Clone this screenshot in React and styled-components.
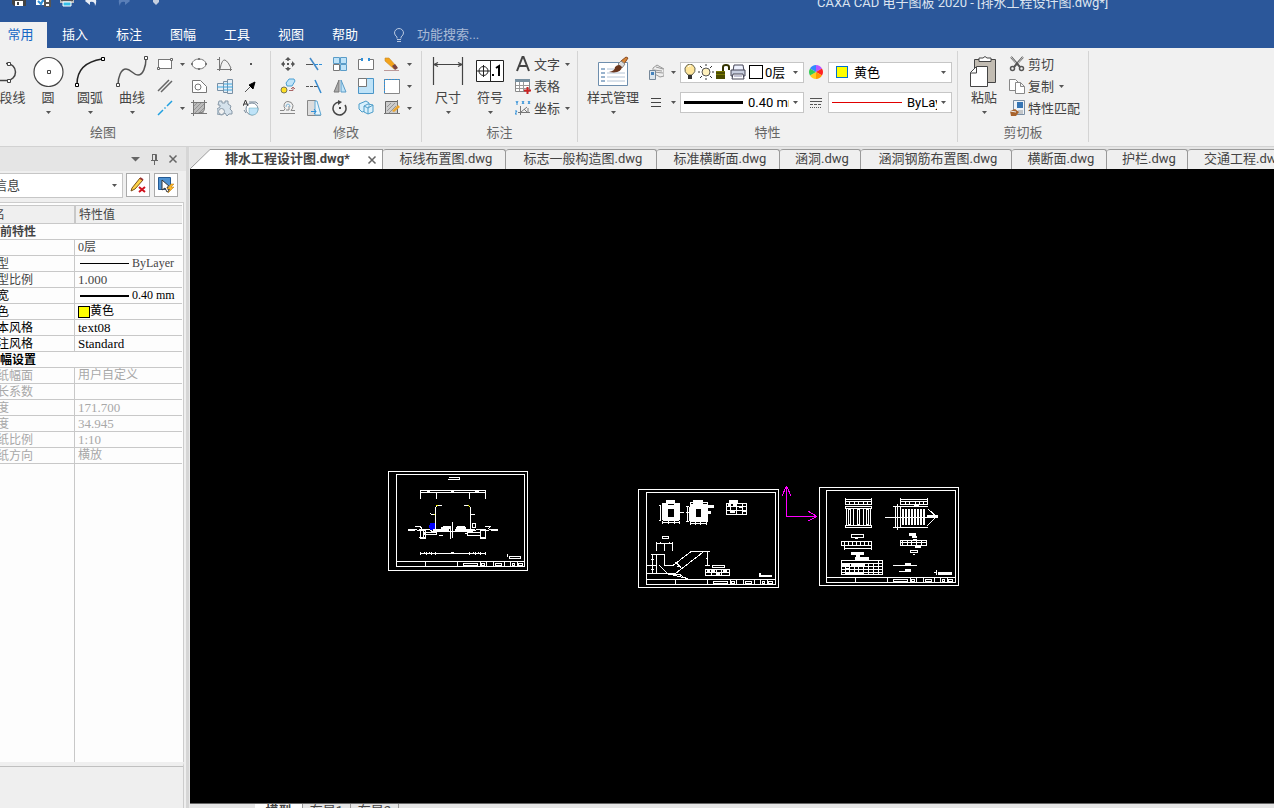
import React from "react";
import styled, { createGlobalStyle, css } from "styled-components";

const ink = "#444";
const blue = "#2f8fd8";
const sky = "#bfe3f8";

const menu = ["常用", "插入", "标注", "图幅", "工具", "视图", "帮助"];

const documents = [
  "标线布置图",
  "标志一般构造图",
  "标准横断面",
  "涵洞",
  "涵洞钢筋布置图",
  "横断面",
  "护栏",
  "交通工程",
];

const properties = [
  { group: "当前特性", tone: "#444" },
  { name: "", value: "0层", tone: "#444" },
  { name: "线型", value: "ByLayer", line: 1, tone: "#444" },
  { name: "线型比例", value: "1.000", latin: true, tone: "#444" },
  { name: "线宽", value: "0.40 mm", line: 2, tone: "#000" },
  { name: "颜色", value: "黄色", swatch: true, tone: "#000" },
  { name: "文本风格", value: "text08", latin: true, tone: "#000" },
  { name: "标注风格", value: "Standard", latin: true, tone: "#000" },
  { group: "图幅设置", tone: "#000" },
  { name: "图纸幅面", value: "用户自定义", tone: "#a8a8a8" },
  { name: "加长系数", value: "", tone: "#a8a8a8" },
  { name: "宽度", value: "171.700", latin: true, tone: "#a8a8a8" },
  { name: "高度", value: "34.945", latin: true, tone: "#a8a8a8" },
  { name: "图纸比例", value: "1:10", latin: true, tone: "#a8a8a8" },
  { name: "图纸方向", value: "横放", tone: "#a8a8a8" },
];

/* 16px tool icons */
const icons = {
  rect: (
    <>
      <rect x="1.5" y="3.5" width="13" height="9" fill="#fff" stroke="#777" />
      <path d="M.5 11.500h2v2h-2zM13.500 2.500h2v2h-2z" fill="#fff" stroke="#666" />
    </>
  ),
  parallel: <path d="M1 13L12 2M4 14L15 3" stroke="#666" strokeWidth="1.5" />,
  center: <path d="M1 15L6 10M7.500 8.500l1-1M10 6l5-5" stroke="#20a0e0" strokeWidth="1.5" />,
  ellipse: (
    <>
      <ellipse cx="8" cy="8" rx="7" ry="5" fill="#fff" stroke="#777" />
      <path d="M0 7h2v2H0zM14 7h2v2h-2zM7 2h2v2H7zM7 12h2v2H7z" fill="#777" />
    </>
  ),
  polygonHole: (
    <>
      <path d="M1.500 2.500h8l6 6v6h-14z" fill="#fff" stroke="#777" />
      <circle cx="7" cy="9" r="3" fill="none" stroke="#777" />
    </>
  ),
  hatch: (
    <>
      <rect x="2" y="3" width="11" height="10" fill="#bbb" />
      <path d="M2 7l4-4M2 11l8-8M4 13l9-9M8 13l5-5" stroke="#888" strokeWidth=".8" />
      <path d="M2.500 0v16M0 2.500h16M13.500 0v8q0 5-6 5M0 13.500h16" fill="none" stroke="#777" />
    </>
  ),
  graph: <path d="M2.500 1v14M0 3.500h3M0 13.500h15M13.500 12v3M3 13q2-10 5-9 3 1 6 8" fill="none" stroke="#777" />,
  bolt: (
    <>
      <path d="M.5 5.500h6v7h-6zM6.500 3.500h4v11h-4zM10.500 1.500h5v14h-5z" fill="#e6eef5" stroke="#7890a5" />
      <path d="M0 9h16M7 6h8M7 12h8" stroke="#3aa6e0" />
    </>
  ),
  gears: (
    <>
      <path d="M2 1h3v2h3V1h3v3l3 2-1 3 2 2v3h-3l-2 2-2-3-3 2-5-1V9l3-2V5H1z" fill="#d5e2ec" stroke="#8899a8" />
      <circle cx="4.500" cy="11.500" r="3" fill="#f1f1f1" stroke="#8899a8" />
    </>
  ),
  dot: <path d="M7 7h2v2H7z" fill="#555" />,
  arrow: (
    <>
      <path d="M2 14l6-6" stroke="#555" />
      <path d="M12 4L6 7l4 4z" fill="#000" stroke="#000" />
    </>
  ),
  fill: (
    <>
      <circle cx="9" cy="9" r="6" fill="#fff" stroke="#789" />
      <path d="M6 8h9q0 7-6 7-3 0-3-3z" fill={sky} stroke="#6ab" strokeWidth=".5" />
      <path d="M0 6L2.500 0 5 6M1 4h3" fill="none" stroke="#333" />
      <path d="M6 2h7l2 2M1 10l2 3" stroke="#789" fill="none" />
    </>
  ),
  move: (
    <>
      <path d="M7 7h2v2H7zM5 4l3-3 3 3zM5 12l3 3 3-3zM4 5L1 8l3 3zM12 5l3 3-3 3z" fill="#555" />
      <path d="M8 2v3M8 11v3M2 8h3M11 8h3" stroke="#555" strokeWidth="1.5" />
    </>
  ),
  trim: (
    <>
      <path d="M4 2l8 12" stroke="#4389c8" strokeWidth="1.5" />
      <path d="M0 8.500h7" stroke="#555" />
      <path d="M9 8.500h7" stroke={blue} strokeDasharray="3 1" />
    </>
  ),
  array: (
    <g stroke="#5a9cc8">
      <path d="M1.500 1.500h6v6h-6zM8.500 1.500h6v6h-6zM8.500 8.500h6v6h-6z" fill={sky} />
      <path d="M1.500 8.500h6v6h-6z" fill="#fff" stroke="#777" />
    </g>
  ),
  breakLine: (
    <>
      <path d="M4.500 3.500h-4v10h15v-10h-4" fill="#fff" stroke="#777" />
      <path d="M4 2v3M11 2v3" stroke={blue} strokeWidth="2" />
    </>
  ),
  erase: (
    <>
      <path d="M0 14.500h15" stroke="#b99" />
      <path d="M1 2l4 0 8 9-3 2-9-8z" fill="#f3a31b" stroke="#c88a28" strokeWidth=".6" />
      <path d="M8 10l3-2 3 4-3 2z" fill="#744" />
    </>
  ),
  copy: (
    <>
      <path d="M6 5l3-4h5l1 2-3 5H7z" fill={sky} stroke="#4b9fd2" />
      <circle cx="4" cy="12" r="3" fill="#ffdf25" stroke="#775" />
      <path d="M9 12.500h4v-3M11 11l2-2 2 2" fill="none" stroke="#a66" />
    </>
  ),
  extend: (
    <>
      <path d="M0 8.500h3M4 8.500h3M8 8.500h4" stroke="#555" />
      <path d="M9 2l6 13" stroke="#358bd0" strokeWidth="1.500" />
    </>
  ),
  mirror: (
    <>
      <path d="M7 2v12H2z" fill="#aaa" stroke="#777" />
      <path d="M9 2v12h5z" fill={sky} stroke="#5a9cc8" />
    </>
  ),
  scale: (
    <>
      <path d="M.5.500h15v15H.500z" fill={sky} stroke="#4b96c8" />
      <path d="M.5.500h8v8h-8z" fill="#fff" stroke="#777" />
    </>
  ),
  stretch: (
    <>
      <path d="M.5 1.500h15v14H.500z" fill="#fff" stroke="#888" />
      <path d="M.5 15V1.500h15" stroke={blue} strokeDasharray="2 1" />
    </>
  ),
  offset: (
    <>
      <path d="M0 10.500h4q2-2 0-4 0-5 4-5t5 4q0 3-2 5h4" fill="none" stroke="#888" />
      <path d="M0 13.500h15M6 10h3V6" fill="none" stroke="#888" />
      <path d="M6 7q0-3 2-3t2 3" fill="none" stroke="#85b8d8" />
    </>
  ),
  chamfer: (
    <>
      <path d="M1.500.500h8l5 15h-13z" fill="#ddd" stroke="#888" />
      <path d="M9 1h2l4 14H9z" fill="#e7f4fb" stroke="#60a8d3" />
      <path d="M5 11.500h5M8 9l2 2.500L8 14" stroke={blue} fill="none" />
    </>
  ),
  rotate: (
    <>
      <path d="M7 2a6.500 6.500 0 1 0 6 3" fill="none" stroke={ink} strokeWidth="1.500" />
      <path d="M6 0l4 2-4 3z" fill={ink} />
      <path d="M7 7h2v2H7z" fill={ink} />
    </>
  ),
  block: (
    <g fill="#d9f0fc" stroke="#4d9dc9">
      <path d="M1 4l7-3 3 2v7l-7 2-3-3z" />
      <path d="M6 6l4-2 5 1v7l-5 2-4-2zM6 6l4 2 5-3M10 8v6" />
    </g>
  ),
  blockEdit: (
    <>
      <path d="M1.500 1.500h12v12h-12z" fill="#ccc" stroke="#666" />
      <path d="M3 7l4-4M3 11l8-8M5 13l7-7" stroke="#888" strokeWidth=".8" />
      <path d="M8 11l6-6 2 2-6 5z" fill="#eba52f" />
      <path d="M0 13.500h16M13.500 0v5" stroke="#777" />
    </>
  ),
  letter: <path d="M2 15L7.500 1h1L14 15M4 10h8" fill="none" stroke={ink} strokeWidth="2" />,
  table: (
    <>
      <path d="M.5 1.500h14v12H.500z" fill="#fff" stroke="#888" />
      <path d="M0 1h15v3H0z" fill="#7890a0" />
      <path d="M4.500 4v9M8.500 4v9M1 7.500h13M1 10.500h13" stroke="#999" />
      <path d="M12.500 9v7M9 12.500h7" stroke="#c22" strokeWidth="2" />
    </>
  ),
  coord: (
    <>
      <path d="M5.500 6v9M3 12.500h12M6 12L12 7M9 9l4 4V8" fill="none" stroke="#777" />
      <path d="M1 1l1 2 1-2M2 3v2M7 1l2 3M9 1L7 4M13 1l2 3M15 1l-2 3M0 11h2l-2 3h2" fill="none" stroke={blue} />
    </>
  ),
  layers: (
    <>
      <path d="M5 4l4-3 7 4v7l-4 1-7-4z" fill="#eee" stroke="#999" />
      <path d="M6 6l8 1M6 8l9 1M8 3l7 2" stroke="#999" />
      <path d="M1.500 6.500h6v9h-6z" fill="#dce6ee" stroke="#789" />
      <path d="M3 8h3v3H3z" fill="#4583bd" />
    </>
  ),
  weights: <path d="M3 4.500h10M3 8.500h10M3 12.500h10" stroke="#444" />,
  wheel: (
    <>
      <path d="M8 8V1a7 7 0 0 1 6 3.500z" fill="#b5f" />
      <path d="M8 8l6-3.500a7 7 0 0 1 0 7z" fill="#f22" />
      <path d="M8 8l6 3.500A7 7 0 0 1 8 15z" fill="#f90" />
      <path d="M8 8v7a7 7 0 0 1-6-3.500z" fill="#fc2" />
      <path d="M8 8l-6 3.500a7 7 0 0 1 0-7z" fill="#3c5" />
      <path d="M8 8L2 4.500A7 7 0 0 1 8 1z" fill="#38f" />
    </>
  ),
  linetypes: (
    <>
      <path d="M2 4.500h12M2 7.500h12" stroke="#555" />
      <path d="M2 10.500h12" stroke="#555" strokeDasharray="3 1" />
      <path d="M2 13.500h12" stroke="#555" strokeDasharray="1 1" />
    </>
  ),
  cut: (
    <>
      <path d="M2 1l9 10M14 1L5 11" stroke="#555" strokeWidth="2" />
      <path d="M2 1l5 6M14 1L9 7" stroke="#eee" strokeWidth=".8" />
      <circle cx="3.500" cy="12.500" r="2" fill="none" stroke="#555" strokeWidth="1.500" />
      <circle cx="12.500" cy="12.500" r="2" fill="none" stroke="#555" strokeWidth="1.500" />
    </>
  ),
  pages: (
    <g fill="#fff" stroke="#888">
      <path d="M.5 1.500h6l3 3v8h-9z" />
      <path d="M6.500 4.500h5l4 4v7h-9zM11.500 4.500v4h4" />
    </g>
  ),
  match: (
    <>
      <path d="M4.500.500h11v14h-11z" fill="#eef3f8" stroke="#7a8ea3" />
      <path d="M8 2h6v6H8z" fill="#3575b5" />
      <path d="M9 11h5M9 13h5" stroke="#999" />
      <path d="M1 11l5-2 4 3-3 4H2z" fill="#a8632d" />
      <path d="M1 11l6 1" stroke="#eee" />
    </>
  ),
  save: (
    <>
      <path d="M1 0h14v15H3l-2-2z" fill="#444" />
      <path d="M4 0h8v7H4zM4 10h8v5H4z" fill="#fff" />
      <path d="M6 11h2v3H6z" fill="#444" />
    </>
  ),
  saveAs: (
    <>
      <path d="M1 0h14v14H1z" fill="#fff" />
      <path d="M3 10l3 3 2-4 3 2" stroke={blue} strokeWidth="2" fill="none" />
      <path d="M9 9h7v7H9z" fill="#555" />
      <path d="M11 9h3v2h-3zM11 13h3v2h-3z" fill="#fff" />
    </>
  ),
  print: (
    <>
      <path d="M1 5h14v7H1z" fill="#bbb" />
      <path d="M2 8h12v2H2z" fill="#555" />
      <path d="M4 11h8v4H4z" fill="#35bfe7" stroke="#fff" />
    </>
  ),
  undo: <path d="M6 5L2 10l5 4v-3q5-1 5 4 4-9-5-8V5z" fill="#e8edf5" />,
  redo: <path d="M10 5l4 5-5 4v-3q-5-1-5 4-4-9 5-8V5z" fill="#5a7fb8" />,
  more: <path d="M5 9h6v2l-3 3-3-3z" fill="#c5cfdf" />,
  bulbOutline: (
    <path
      d="M6 11.500V10Q3.500 8 3.500 6a4.500 4.500 0 0 1 9 0q0 2-2.500 4v1.500M6 12.500h4M6 14.500h4"
      fill="none"
      stroke="#b8c8e0"
    />
  ),
  bulb: (
    <>
      <path d="M6 11Q2 8 3 4q2-4 5-4t5 4q1 4-3 7z" fill="#ffe69b" stroke="#665" />
      <path d="M6 11h4v4H6z" fill="#333" />
      <path d="M6 3q1-2 3-1" stroke="#fff" fill="none" />
    </>
  ),
  sun: (
    <>
      <circle cx="8" cy="8" r="4" fill="#fff1bd" stroke="#555" />
      <path d="M8 0v2M8 14v2M0 8h2M14 8h2M2 2l2 2M12 12l2 2M14 2l-2 2M4 12l-2 2" stroke="#333" />
    </>
  ),
  lock: (
    <>
      <path d="M2 7h9v8H2z" fill="#777700" />
      <path d="M2 9h9M2 12h9M2 14h9" stroke="#222200" />
      <path d="M9 7V3q0-2 3-2t3 2v3" stroke="#333300" strokeWidth="2" fill="none" />
    </>
  ),
  printer: (
    <>
      <path d="M4 1h9l1 6H3z" fill="#eef2ff" stroke="#445" />
      <path d="M1 6h14v6H1z" fill="#c9cfdf" stroke="#445" />
      <path d="M3 10h10l1 5H2z" fill="#fff" stroke="#445" />
      <path d="M4 12h8" stroke="#88a" />
    </>
  ),
  pencilX: (
    <>
      <path d="M2 11L10 1l3 2-8 9-4 2z" fill="#ffd346" stroke="#775019" />
      <path d="M10 1l3 2" stroke="#933" strokeWidth="2" />
      <path d="M9 10l6 5M15 10l-6 5" stroke="#d1121d" strokeWidth="2" />
    </>
  ),
  pick: (
    <>
      <path d="M.5.500h12v12H.500z" fill="#4d91d1" stroke="#245a94" />
      <path d="M4 3v10l3-2 2 4 2-1-2-4h3z" fill="#fff" stroke="#333" />
      <path d="M13 7l-4 5h3l-2 4 6-6h-3l3-3z" fill="#ffb928" stroke="#b47410" strokeWidth=".5" />
    </>
  ),
  pin: <path d="M6.500 3.500h4v6M6.500 3v6M9.500 3v6M5 9.500h7M8.500 10v4" fill="none" stroke="#666" />,
  close: <path d="M4.500 4.500l7 7M11.500 4.500l-7 7" stroke="#666" strokeWidth="1.500" />,
  down: <path d="M4 6h9l-4.500 4.500z" fill="#666" />,
};

/* 32px ribbon icons */
const bigIcons = {
  polyline: (
    <>
      <path d="M0 25.500h17a8.500 8.500 0 0 0 0-17h-1" fill="none" stroke={ink} strokeWidth="1.500" />
      <path d="M17.500 7.500h3v3h-3zM17.500 24.500h3v3h-3z" fill="#fff" stroke={ink} />
    </>
  ),
  circle: (
    <>
      <circle cx="16.500" cy="17" r="14.500" fill="#fff" stroke={ink} strokeWidth="1.200" />
      <path d="M15.500 15.500h3v3h-3z" fill="#fff" stroke={ink} />
    </>
  ),
  arc: (
    <>
      <path d="M3 29Q3 8 28 4" fill="none" stroke="#222" strokeWidth="1.500" />
      <path d="M1.500 28.500h3v3h-3zM27.500 2.500h3v3h-3z" fill="#fff" stroke="#000" />
    </>
  ),
  spline: (
    <>
      <path d="M2 30C2 22 5 14 10 14s7 6 12 6 8-8 8-17" fill="none" stroke="#555" strokeWidth="1.500" />
      <path d="M.5 28.500h3v3h-3zM28.500 1.500h3v3h-3z" fill="#fff" stroke={ink} />
    </>
  ),
  dimension: (
    <path
      d="M1.500 2v28M30.500 2v28M2 9.500h28M6 7.500l-4 2 4 2M26 7.500l4 2-4 2"
      fill="none"
      stroke={ink}
      strokeWidth="1.200"
    />
  ),
  symbol: (
    <>
      <path d="M2.500 5.500h27v21h-27zM16.500 5v21" fill="#fff" stroke="#222" />
      <circle cx="9.500" cy="16" r="4.500" fill="none" stroke="#222" />
      <path d="M3 16h13M9.500 10v12" stroke="#222" />
      <path d="M22 13l3-2v10M19 19v2" stroke="#000" strokeWidth="2" fill="none" />
    </>
  ),
  styles: (
    <>
      <path d="M1.500 7.500h29v23h-29z" fill="#fff" stroke="#6e8ead" />
      <path d="M4 14h4M4 18h4M4 22h4M4 26h4" stroke="#35699c" />
      <path d="M10 14h7M10 18h18M10 22h18M10 26h18" stroke="#b4c4d6" />
      <path d="M24 6l5-4 2 1-4 6z" fill="#d58636" stroke="#8b4a20" />
      <path d="M21 9l3-3 4 3-3 4z" fill="#ddd" stroke="#888" />
      <path d="M12 17q6-1 6-5 4-4 7 0-1 7-13 5z" fill="#6b371e" />
    </>
  ),
  paste: (
    <>
      <path d="M6.500 4.500h21v23h-21z" fill="#c2bcb2" stroke={ink} />
      <path d="M11 6.500V3h4q2-3 4 0h4v3.500z" fill="#fff" stroke={ink} />
      <path d="M8.500 11.500h11v20h-17v-14z" fill="#fff" stroke={ink} />
      <path d="M8.500 12v6h-6" fill="none" stroke={ink} />
    </>
  ),
};

const Icon = ({ name }) => <Glyph viewBox="0 0 16 16">{icons[name]}</Glyph>;

const Caret = () => (
  <CaretMark viewBox="0 0 5 3">
    <path d="M0 0h5L2.500 3z" />
  </CaretMark>
);

const Tool = ({ icon, label, caret }) => (
  <ToolButton type="button" aria-label={label ? undefined : icon}>
    <Icon name={icon} />
    {label && <span>{label}</span>}
    {caret && <Caret />}
  </ToolButton>
);

const Large = ({ icon, label, wide, caret = true }) => (
  <LargeButton type="button" $wide={wide}>
    <LargeGlyph viewBox="0 0 32 32">{bigIcons[icon]}</LargeGlyph>
    <span>{label}</span>
    {caret && <Caret />}
  </LargeButton>
);

const Combo = ({ name, value, children }) => (
  <ComboBox>
    {children}
    <select aria-label={name} defaultValue={value}>
      <option>{value}</option>
    </select>
    <Caret />
  </ComboBox>
);

/* title block strip shared by all drawing sheets, stands on its inner frame */
const SheetFrame = ({ d, block }) => (
  <>
    <path d={d} />
    <g transform={block}>
      <path d="M0 0h384M87 0v15M183 0v15M252 0v15M270 0v15M291 0v15M324 0v15M342 0v15M363 0v15" />
      <path d="M201 6h42v6h-42zM255 5h9v7h-9zM297 6h18v6h-18zM348 6h7v6h-7zM366 6h12v6h-12z" />
    </g>
  </>
);

const App = () => {
  return (
    <Shell>
      <GlobalStyle />
      <Header>
        <TitleBar>
          <QuickAccess>
            <Icon name="save" />
            <Icon name="saveAs" />
            <Icon name="print" />
            <Icon name="undo" />
            <HistoryTools>
              <Icon name="redo" />
              <Icon name="more" />
            </HistoryTools>
          </QuickAccess>
          <Title>CAXA CAD 电子图板 2020 - [排水工程设计图.dwg*]</Title>
        </TitleBar>
        <Menu>
          {menu.map((item, i) => (
            <MenuTab type="button" key={item} $active={i === 0}>
              {item}
            </MenuTab>
          ))}
          <Search>
            <Icon name="bulbOutline" />
            <input type="text" aria-label="功能搜索" placeholder="功能搜索..." />
          </Search>
        </Menu>
      </Header>

      <Ribbon>
        <Group $width={335} $end>
          <GroupBody>
            <Large icon="polyline" label="多段线" caret={false} />
            <Large icon="circle" label="圆" />
            <Large icon="arc" label="圆弧" />
            <Large icon="spline" label="曲线" />
            <ToolGrid $columns="34px 26px 26px 26px">
              <Tool icon="rect" caret />
              <Tool icon="ellipse" />
              <Tool icon="graph" />
              <Tool icon="dot" />
              <Tool icon="parallel" />
              <Tool icon="polygonHole" />
              <Tool icon="bolt" />
              <Tool icon="arrow" />
              <Tool icon="center" caret />
              <Tool icon="hatch" />
              <Tool icon="gears" />
              <Tool icon="fill" />
            </ToolGrid>
          </GroupBody>
          <GroupName>绘图</GroupName>
        </Group>
        <Group $width={150}>
          <GroupBody>
            <ToolGrid $columns="26px 26px 26px 26px 36px">
              <Tool icon="move" />
              <Tool icon="trim" />
              <Tool icon="array" />
              <Tool icon="breakLine" />
              <Tool icon="erase" caret />
              <Tool icon="copy" />
              <Tool icon="extend" />
              <Tool icon="mirror" />
              <Tool icon="scale" />
              <Tool icon="stretch" caret />
              <Tool icon="offset" />
              <Tool icon="chamfer" />
              <Tool icon="rotate" />
              <Tool icon="block" />
              <Tool icon="blockEdit" caret />
            </ToolGrid>
          </GroupBody>
          <GroupName>修改</GroupName>
        </Group>
        <Group $width={156}>
          <GroupBody>
            <Large icon="dimension" label="尺寸" />
            <Large icon="symbol" label="符号" />
            <ToolGrid $columns="auto">
              <Tool icon="letter" label="文字" caret />
              <Tool icon="table" label="表格" />
              <Tool icon="coord" label="坐标" caret />
            </ToolGrid>
          </GroupBody>
          <GroupName>标注</GroupName>
        </Group>
        <Group $width={380}>
          <GroupBody>
            <Large icon="styles" label="样式管理" wide />
            <PropertyGrid>
              <Tool icon="layers" caret />
              <Combo name="图层" value="0层">
                <Icon name="bulb" />
                <Icon name="sun" />
                <Icon name="lock" />
                <Icon name="printer" />
                <Swatch $color="#fff" $edge="#000" />
              </Combo>
              <Tool icon="wheel" />
              <Combo name="颜色" value="黄色">
                <ColorPad>
                  <Swatch $color="#ff0" $edge="#0070d0" $small />
                </ColorPad>
              </Combo>
              <Tool icon="weights" caret />
              <Combo name="线宽" value="0.40 mm">
                <Stroke $size={3} $width={59} $color="#000" />
              </Combo>
              <Tool icon="linetypes" />
              <Combo name="线型" value="ByLayer">
                <Stroke $size={1} $width={70} $color="#e00000" />
              </Combo>
            </PropertyGrid>
          </GroupBody>
          <GroupName>特性</GroupName>
        </Group>
        <Group $width={131}>
          <GroupBody>
            <Large icon="paste" label="粘贴" />
            <ToolGrid $columns="auto">
              <Tool icon="cut" label="剪切" />
              <Tool icon="pages" label="复制" caret />
              <Tool icon="match" label="特性匹配" />
            </ToolGrid>
          </GroupBody>
          <GroupName>剪切板</GroupName>
        </Group>
      </Ribbon>

      <Workspace>
        <Panel>
          <PanelHeader>
            <Icon name="down" />
            <Icon name="pin" />
            <Icon name="close" />
          </PanelHeader>
          <PanelTools>
            <Combo name="选择" value="信息" />
            <PanelButton type="button" aria-label="清除">
              <Icon name="pencilX" />
            </PanelButton>
            <PanelButton type="button" aria-label="拾取">
              <Icon name="pick" />
            </PanelButton>
          </PanelTools>
          <PropertySheet>
            <PropertyTable>
              <thead>
                <tr>
                  <th>特性名</th>
                  <th>特性值</th>
                </tr>
              </thead>
              <tbody>
                {properties.map((row, i) =>
                  row.group ? (
                    <PropertyRow key={i} $tone={row.tone}>
                      <th colSpan={2}>{row.group}</th>
                    </PropertyRow>
                  ) : (
                    <PropertyRow key={i} $tone={row.tone} $latin={row.latin}>
                      <td>{row.name}</td>
                      <td>
                        <Value>
                          {row.line && <Stroke $size={row.line} $width={49} $color="#000" />}
                          {row.swatch && <Swatch $color="#ff0" $edge="#000" $small />}
                          {row.value}
                        </Value>
                      </td>
                    </PropertyRow>
                  )
                )}
              </tbody>
            </PropertyTable>
            <ColumnRest />
          </PropertySheet>
          <PanelFoot />
        </Panel>
        <Splitter />

        <Editor>
          <DocumentTabs>
            <ActiveDocument>
              <svg viewBox="0 0 20 20">
                <path d="M0 20L20 0v20z" fill="#fff" />
                <path d="M0 20L20 .5" stroke="#999" />
              </svg>
              <button type="button">排水工程设计图.dwg*</button>
              <CloseButton type="button" aria-label="关闭">
                <Icon name="close" />
              </CloseButton>
            </ActiveDocument>
            {documents.map((name) => (
              <DocumentTab type="button" key={name} $width={name.length * 14 + 53}>
                {name}.dwg
              </DocumentTab>
            ))}
          </DocumentTabs>

          <Canvas>
            <Drawing $x={190} $y={296} $w={156} $h={110} viewBox="0 0 468 330">
              <SheetFrame d="M25.500 19.500h417v297h-417zM49.500 28.500h384v276h-384z" block="translate(49.500 289.500)" />
              <path d="M208 37.500h31v6h-31M205 43.500h4M121.500 102V76.500h195v25M121 82.500h195M169.500 80v22M268.500 80v22" />
              <path d="M140 79.500h10M214 76.500h9M286 79.500h10" strokeWidth="6" />
              <path d="M166.500 196v-69l6-6h12M271.500 196v-69l-6-6h-15M150 146l8 3h8M284 147h-12M217.500 171v48M211.500 183v38" />
              <path d="M169 123l5-3M265 122l6 3M162 147v4" stroke="#ff0" />
              <path d="M150 177h15M148 184h18M150 190h15" stroke="#00f" strokeWidth="7" />
              <path d="M86 193h18l12 4 14-4h16l10 6h120l20-6h14l10 4 14-4h20M106 183h14l6 8M316 183h16l-8 10" />
              <path d="M84 194h20M334 194h20M182 190h28M228 190h30M158 196h50M226 196h60M118 194h18M300 194h18" strokeWidth="6" />
              <path d="M190 183h16l4 6M230 183h22l6 6M134 203h34v6h-34zM262 202h40v8h-40z" />
              <path d="M121.500 197h14v22h-14zM302.500 197h14v22h-14zM278.500 176h8v12h-8zM130 199v20M176 210h14M256 206h8" />
              <path d="M118 218h18M300 218h18M218 200v5" />
              <path d="M121 265.500h196M122 262v8M133 262v6M139 262v8M149 262v6M155 262v8M167 262v8M268 262v8M279 262v6M285 262v8M296 262v6M302 262v8M315 262v8" />
              <path d="M214 263h8" strokeWidth="5" />
              <path d="M387.500 274.500h34v6h-34zM383 267v8" />
            </Drawing>

            <Drawing $x={440} $y={313} $w={150} $h={110} viewBox="0 0 450 330">
              <SheetFrame d="M25.500 22.500h420v294h-420zM49.500 31.500h387v276h-387z" block="translate(49.500 292.500)" />
              <path d="M108 60h26M190 60h28M298 60h26" strokeWidth="10" />
              <path d="M97.500 64.500h52v48h-52z" />
              <path d="M105 64v48M141 64v48" strokeWidth="16" />
              <path d="M98 74h50M98 110h50" strokeWidth="12" />
              <path d="M97 120h53M97 116v9M115 116v9M132 116v9M149 116v9M91 70v47M87 70h6M87 116h6M150 90h12" />
              <path d="M180.500 61.500h51v56h-51z" />
              <path d="M188 66v50M222 66v50" strokeWidth="18" />
              <path d="M180 74h50M180 112h50" strokeWidth="16" />
              <path d="M172 74v43M168 90h10M178 74v43M168 74h10M168 117h10M180 125h50M181 121v8M197 121v8M212 121v8M229 121v8" />
              <path d="M231 74h20M231 92h12" strokeWidth="8" />
              <path d="M289.500 64.500h61v33h-61zM289 74h60M289 85h60M301 64v30M318 64v32M336 64v32" />
              <path d="M295 70h8M310 70h8M326 74h10M340 88h9M304 90h10" strokeWidth="6" />
              <path d="M97.500 163.500h18v6h-18zM79 184h49M79.500 181v25M103.500 184v22M127.500 181v25M91 181v3M117 181v3" />
              <path d="M63 217h41v33h25l54-41h38l-84 65H50M67.500 217v57M79.500 217v57M50 250h30M63 232h8M64 262h8" />
              <path d="M87 250l28 26 60 14M115 276h32l14 10M137 241l16 16M140 252l12 2M225 208h15M231.500 209v40M225 249h15M227 228h6" />
              <path d="M247.500 250.500h36v6h-36zM226.500 262.500h72v18h-72zM226 270h72M243 262v18M258 262v18M274 262v18" />
              <path d="M232 266h8M246 266h9M262 276h9M279 266h12" strokeWidth="6" />
              <path d="M389 274v8h36" strokeWidth="5" />
            </Drawing>

            <Drawing $x={593} $y={313} $w={40} $h={44} viewBox="0 0 40 44" $color="#f0f" $thin>
              <path d="M3.500 4v30.500H34M3.500 4L-1 14M3.500 4L8 14M34 34.500L25 29M34 34.500L25 39" />
            </Drawing>

            <Drawing $x={622} $y={313} $w={156} $h={110} viewBox="0 0 468 330">
              <SheetFrame d="M22.500 16.500h417v294h-417zM43.500 25.500h387v276h-387z" block="translate(43.500 286.500)" />
              <path d="M100.500 48v20M178.500 48v20M99 52.500h80M99 58.500h80M99 67.500h80M112.500 59v8M127.500 59v8M139.500 59v8M154.500 59v8M166.500 59v8" />
              <path d="M100.500 73.500h78v6h-78zM103.500 80v50M175.500 80v50M100.500 130.500h78v6h-78zM109.500 82.500v45h6v-45zM124.500 80v48M136.500 82.500v45h6v-45zM154.500 80v48M163.500 82.500v45h6v-45z" />
              <path d="M265.500 48v20M346.500 48v20M265 52.500h82M265 58.500h82M265 67.500h82M280.500 59v8M292.500 59v8M310.500 59v8M322.500 59v8M334.500 59v8M306 70.500h14" />
              <path d="M243 73.500h105M243 136.500h105M250.500 74v62M256.500 66v78M265.500 74v62M220 106.500h158M347 80l26 23-26 28" />
              <path d="M273 80v50M282 80v50M291 80v50M300 80v50M309 80v50M318 80v50M327 80v50M336 80v50" strokeWidth="4" />
              <path d="M345 103h33" strokeWidth="8" />
              <path d="M118.500 157.500h36v8h-36zM128 169h10M88.500 178.500h91v11h-91zM98 178v12M109 178v12M121 178v12M133 178v12M145 178v12M157 178v12M168 178v12M97.500 190v13M179.500 190v13M97 198h82" />
              <path d="M117 214h38M130 229h40" strokeWidth="8" />
              <path d="M138 219v18" strokeWidth="10" />
              <path d="M88.500 235.500h124v42h-124zM89 244h123M89 254h123M89 262h123M89 270h123M99 244v33M112 244v33M126 244v33M140 244v33M155 244v33M170 244v33M184 244v33M199 235v42" />
              <path d="M90 249h20M118 249h40M101 272h55M102 262h10" strokeWidth="6" />
              <path d="M291 157h22M300 164h16M303 173h12M310 194h16" strokeWidth="7" />
              <path d="M265.500 175.500h79v15h-79zM272 175v14M285 175v14M299 175v14M313 175v14M328 175v14M267 182h77" />
              <path d="M295.500 205.500h22v6h-22zM302 216h6M243 250h72M262 268h34" />
              <path d="M280 245h16M280 263h17" strokeWidth="7" />
              <path d="M378 274h42" strokeWidth="8" />
              <path d="M373 264v14M366 270h6" />
            </Drawing>
          </Canvas>

          <SheetTabs>
            <SheetTab type="button" $active>
              模型
            </SheetTab>
            <SheetTab type="button">布局1</SheetTab>
            <SheetTab type="button">布局2</SheetTab>
          </SheetTabs>
        </Editor>
      </Workspace>
    </Shell>
  );
};

const GlobalStyle = createGlobalStyle`
  * {
    box-sizing: border-box;
  }
  body {
    margin: 0;
    overflow: hidden;
    font-family: Roboto, "Noto Sans CJK SC", sans-serif;
    font-size: 13px;
    color: #444;
  }
  button,
  input,
  select {
    margin: 0;
    padding: 0;
    border: 0;
    background: transparent;
    font: inherit;
    color: inherit;
  }
  svg {
    display: block;
    flex-shrink: 0;
  }
`;

const Shell = styled.div`
  display: flex;
  flex-direction: column;
  height: 100vh;
  overflow: hidden;
  background: #f1f1f1;
`;

const Header = styled.header`
  background: #2b579a;
  overflow: hidden;
`;

const TitleBar = styled.div`
  display: flex;
  height: 29px;
  margin-top: -7px;
  line-height: 20px;
  color: #dce4f0;
`;

const QuickAccess = styled.div`
  display: flex;
  gap: 8px;
  flex: 0 0 817px;
  padding-left: 11px;
  margin-top: -2px;
`;

const HistoryTools = styled.div`
  display: flex;
  gap: 16px;
  padding-left: 9px;
`;

const Title = styled.div`
  white-space: nowrap;
`;

const Menu = styled.nav`
  display: flex;
  height: 26px;
  margin-left: -6px;
`;

const MenuTab = styled.button`
  width: 54px;
  color: #fff;
  line-height: 24px;

  &:first-child {
    width: 53px;
    margin-right: 1px;
  }

  ${({ $active }) =>
    $active &&
    css`
      background: #f1f1f1;
      color: #1666c5;
    `}
`;

const Search = styled.label`
  display: flex;
  align-items: center;
  gap: 10px;
  margin-left: 19px;
  color: #b4c4de;

  input {
    width: 160px;
    line-height: 24px;
    outline: none;
  }
  input::placeholder {
    color: #a9bad6;
    opacity: 1;
  }
`;

const Ribbon = styled.section`
  display: flex;
  margin-left: -64px;
  padding: 3px 0 4px;
  border-bottom: 1px solid #d2d2d2;
  background: #f1f1f1;
`;

const Group = styled.div`
  flex: 0 0 ${({ $width }) => $width}px;
  display: flex;
  flex-direction: column;
  padding: 2px 5px 0;
  border-right: 1px solid #d4d4d4;

  > div:first-child {
    justify-content: ${({ $end }) => ($end ? "flex-end" : "flex-start")};
  }
`;

const GroupBody = styled.div`
  display: flex;
  height: 68px;
`;

const GroupName = styled.div`
  height: 21px;
  line-height: 24px;
  text-align: center;
  color: #666;
`;

const Glyph = styled.svg`
  width: 16px;
  height: 16px;
  fill: none;
`;

const LargeGlyph = styled.svg`
  width: 32px;
  height: 32px;
  margin-top: 2px;
  fill: none;
`;

const CaretMark = styled.svg`
  width: 5px;
  height: 3px;
  fill: #555;
`;

const ToolGrid = styled.div`
  display: grid;
  grid-template-columns: ${({ $columns }) => $columns};
  grid-auto-rows: 22px;
`;

const ToolButton = styled.button`
  display: flex;
  align-items: center;
  gap: 3px;
  padding-left: 4px;
  white-space: nowrap;

  span {
    padding-bottom: 2px;
  }
  ${CaretMark} {
    margin-left: 2px;
  }
  ${Glyph} + ${CaretMark} {
    margin-left: 4px;
  }
`;

const LargeButton = styled.button`
  width: ${({ $wide }) => ($wide ? 60 : 42)}px;
  display: flex;
  flex-direction: column;
  align-items: center;
  white-space: nowrap;

  span {
    height: 24px;
    line-height: 22px;
  }
`;

const PropertyGrid = styled.div`
  display: grid;
  grid-template-columns: 36px 124px 24px 124px;
  grid-auto-rows: 30px;
  align-items: center;
  padding: 4px 0 0 1px;
`;

const ComboBox = styled.label`
  display: flex;
  align-items: center;
  height: 21px;
  min-width: 0;
  padding: 0 5px 0 1px;
  border: 1px solid #c6c6c6;
  background: #fff;
  color: #000;

  select {
    flex: 1;
    min-width: 0;
    margin-right: 4px;
    padding-left: 2px;
    appearance: none;
    outline: none;
    overflow: hidden;
    text-overflow: clip;
  }
  ${Glyph} + span {
    margin-left: 3px;
  }
`;

const Swatch = styled.span`
  flex: none;
  width: ${({ $small }) => ($small ? 12 : 14)}px;
  height: ${({ $small }) => ($small ? 12 : 14)}px;
  border: 1px solid ${({ $edge }) => $edge};
  background: ${({ $color }) => $color};
`;

const ColorPad = styled.span`
  padding: 0 4px 0 6px;
  display: flex;
`;

const Stroke = styled.span`
  flex: none;
  width: ${({ $width }) => $width}px;
  height: ${({ $size }) => $size}px;
  margin: 0 3px 0 2px;
  background: ${({ $color }) => $color};
`;

const Workspace = styled.div`
  flex: 1;
  min-height: 0;
  display: flex;
`;

const Panel = styled.aside`
  flex: 0 0 226px;
  display: flex;
  flex-direction: column;
  margin-left: -40px;
  background: #efefef;
`;

const PanelHeader = styled.div`
  display: flex;
  justify-content: flex-end;
  align-items: center;
  gap: 3px;
  height: 24px;
  padding-right: 5px;
  background: #e5e5e5;
`;

const PanelTools = styled.div`
  display: flex;
  gap: 3px;
  padding: 2px 7px 4px 0;

  ${ComboBox} {
    flex: 1;
    height: 25px;
    padding-left: 31px;
    color: #444;
  }
`;

const PanelButton = styled.button`
  display: flex;
  align-items: center;
  justify-content: center;
  width: 24px;
  height: 24px;
  margin-right: 1px;
  border: 1px solid #aaa;
  background: #fff;
`;

const PropertySheet = styled.div`
  flex: 1;
  min-height: 0;
  display: flex;
  flex-direction: column;
  margin-right: 2px;
  padding-right: 1px;
  padding-top: 2px;
  border-top: 1px solid #ccc;
  border-right: 1px solid #ccc;
  background: #fdfdfd;
`;

const PropertyTable = styled.table`
  width: 100%;
  table-layout: fixed;
  border-collapse: separate;
  border-spacing: 0;
  font-family: "Liberation Serif", "Noto Sans CJK SC", serif;
  font-size: 12px;

  th,
  td {
    height: 16px;
    padding: 2px 0 0 25px;
    border-bottom: 1px solid #c8c8c8;
    line-height: 13px;
    text-align: left;
    white-space: nowrap;
    overflow: hidden;
  }
  td:last-child {
    padding: 0 0 0 3px;
    border-left: 1px solid #c8c8c8;
  }
  th:first-child {
    padding-left: 28px;
  }
  thead th {
    height: 19px;
    border-top: 1px solid #c8c8c8;
    background: #efefef;
    font-weight: normal;
  }
  thead th:first-child {
    width: 114px;
    padding-left: 9px;
  }
  thead th:last-child {
    padding-left: 3px;
    border-left: 2px solid #c8c8c8;
  }
`;

const PropertyRow = styled.tr`
  color: ${({ $tone }) => $tone};

  td:last-child {
    font-size: ${({ $latin }) => ($latin ? 13 : 12)}px;
  }
`;

const Value = styled.div`
  display: flex;
  align-items: center;
  height: 15px;
`;

const ColumnRest = styled.div`
  flex: 1;
  width: 115px;
  border-right: 1px solid #c8c8c8;
`;

const PanelFoot = styled.div`
  height: 46px;
  margin-right: 2px;
  border-top: 4px solid #efefef;
  border-right: 1px solid #ccc;

  &::before {
    content: "";
    display: block;
    border-top: 1px solid #c0c0c0;
  }
`;

const Splitter = styled.div`
  flex: 0 0 4px;
  border-right: 1px solid #e8e8e8;
  background: #d6d6d6;
`;

const Editor = styled.main`
  flex: 1;
  min-width: 0;
  display: flex;
  flex-direction: column;
  overflow: hidden;
`;

const DocumentTabs = styled.div`
  display: flex;
  height: 22px;
  padding-top: 2px;
  background: #e5e5e5;
`;

const ActiveDocument = styled.div`
  flex: none;
  display: flex;
  align-items: center;
  width: 193px;
  border-right: 1px solid #999;
  background: linear-gradient(90deg, transparent 20px, #fff 20px);

  svg {
    width: 20px;
    height: 20px;
  }
  > button:first-of-type {
    flex: 1;
    height: 20px;
    padding: 0 0 2px 15px;
    border-top: 1px solid #999;
    line-height: 17px;
    text-align: left;
    font-weight: bold;
    white-space: nowrap;
  }
`;

const CloseButton = styled.button`
  height: 20px;
  padding-right: 2px;
  border-top: 1px solid #999;

  ${Glyph} {
    width: 16px;
    height: 16px;
  }
`;

const DocumentTab = styled.button`
  flex: 0 0 ${({ $width }) => $width}px;
  padding: 0 0 2px 4px;
  border-top: 1px solid #999;
  border-right: 1px solid #999;
  border-radius: 3px 3px 0 0;
  background: #efefef;
  line-height: 17px;
  white-space: nowrap;
`;

const Canvas = styled.div`
  flex: 1;
  position: relative;
  overflow: hidden;
  background: #000;
`;

const Drawing = styled.svg`
  position: absolute;
  left: ${({ $x }) => $x}px;
  top: ${({ $y }) => $y}px;
  width: ${({ $w }) => $w}px;
  height: ${({ $h }) => $h}px;
  overflow: visible;
  fill: none;
  stroke: ${({ $color }) => $color || "#fff"};
  stroke-width: ${({ $thin }) => ($thin ? 1 : 3)};
  shape-rendering: crispEdges;
`;

const SheetTabs = styled.div`
  display: flex;
  flex: none;
  height: 18px;
  margin-bottom: -13px;
  padding-left: 65px;
  border-top: 1px solid #666;
  background: #e5e5e5;
`;

const SheetTab = styled.button`
  width: 48px;
  padding-bottom: 4px;
  border-right: 1px solid #999;
  line-height: 13px;
  background: ${({ $active }) => ($active ? "#fff" : "transparent")};
  font-weight: ${({ $active }) => ($active ? "bold" : "normal")};
`;

export default App;
